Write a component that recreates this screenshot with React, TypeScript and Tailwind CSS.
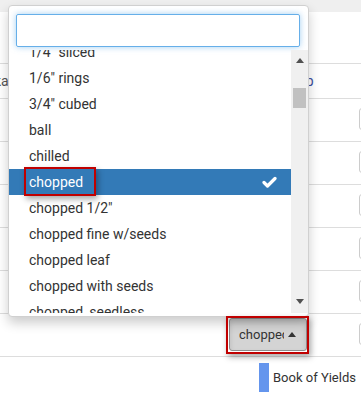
import React from 'react';

const options = [
  '1/4" sliced',
  '1/6" rings',
  '3/4" cubed',
  'ball',
  'chilled',
  'chopped',
  'chopped 1/2"',
  'chopped fine w/seeds',
  'chopped leaf',
  'chopped with seeds',
  'chopped, seedless',
];

const selected = 'chopped';

function Caret({ up = true, className = '' }: { up?: boolean; className?: string }) {
  return (
    <svg width="8" height="5" viewBox="0 0 8 5" className={className}>
      {up ? <polygon points="0,5 8,5 4,0" fill="currentColor" /> : <polygon points="0,0 8,0 4,5" fill="currentColor" />}
    </svg>
  );
}

function TableRow({ active = false }: { active?: boolean }) {
  return (
    <div className="h-[43px] border-b border-[#dddddd] flex items-start pt-[4px]">
      <button
        className={
          active
            ? 'shrink-0 ml-[229px] w-[78px] h-[33px] flex items-center pl-[9px] border border-[#8c8c8c] bg-[#d4d4d4] rounded-[3px] shadow-[inset_0_3px_5px_rgba(0,0,0,0.125)] text-[13px] text-[#333]'
            : 'shrink-0 ml-[229px] w-[78px] h-[33px] flex items-center pl-[9px] border border-[#adadad] bg-white rounded-[3px] text-[13px] text-[#333]'
        }
      >
        <span className="w-[45px] overflow-hidden whitespace-nowrap text-left">chopped</span>
        <Caret className="ml-[4px] text-[#333]" />
      </button>
      <div className="shrink-0 ml-[52px] mt-[5px] w-[14px] h-[22px] border border-[#cccccc] rounded-[3px]" />
    </div>
  );
}

function Scrollbar() {
  return (
    <div className="w-[17px] h-full bg-[#f0f0f0] flex flex-col items-center">
      <Caret className="mt-[8px] text-[#505050]" />
      <div className="mt-[25px] w-[13px] h-[20px] bg-[#c1c1c1]" />
      <div className="flex-1" />
      <Caret up={false} className="mb-[9px] text-[#505050]" />
    </div>
  );
}

export default function App() {
  return (
    <div className="relative w-[361px] h-[408px] bg-white overflow-hidden font-['Roboto',sans-serif] text-[#333]">
      {/* page behind the dropdown */}
      <div className="h-[12px] bg-[#efefef]" />
      <div className="h-[52px] border-b border-[#dddddd]" />
      <div className="h-[35px] border-b border-[#dddddd] flex items-center text-[14px] whitespace-nowrap">
        <span className="shrink-0 w-[291px] -ml-[6px] text-[#555]">ka</span>
        <span className="shrink-0 text-[#3d4f9e]">Prep</span>
      </div>
      <TableRow />
      <TableRow />
      <TableRow />
      <TableRow />
      <TableRow />
      <TableRow active />
      <div className="flex items-start pt-[6px] pl-[259px] gap-[4px]">
        <div className="w-[10px] h-[29px] bg-[#6495ed]" />
        <span className="text-[13px] leading-[29px] text-[#333]">Book of Yields</span>
      </div>

      {/* open select dropdown */}
      <div className="absolute left-[8px] top-[5px] w-[301px] h-[312px] bg-white border border-[#d0d0d0] rounded-[4px] shadow-[0_6px_12px_rgba(0,0,0,0.2)] flex flex-col">
        <div className="px-[7px] pt-[8px]">
          <input className="w-[284px] h-[33px] border border-[#66afe9] rounded-[2px] outline-none shadow-[0_0_6px_rgba(102,175,233,0.6)] px-[8px] text-[14px]" />
        </div>
        <div className="mt-[3px] h-[263px] flex">
          <div className="flex-1 overflow-hidden">
            <ul className="-mt-[11px]">
              {options.map((o) => (
                <li
                  key={o}
                  className={
                    o === selected
                      ? 'h-[26px] flex items-center pl-[20px] pr-[14px] bg-[#337ab7] text-white text-[14px]'
                      : 'h-[26px] flex items-center pl-[20px] pr-[14px] text-[#333] text-[14px]'
                  }
                >
                  <span className="flex-1 whitespace-nowrap">{o}</span>
                  {o === selected && (
                    <svg width="15" height="12" viewBox="0 0 15 12">
                      <polyline points="2,6.5 5.5,10 13,2.5" fill="none" stroke="white" strokeWidth="3.2" strokeLinecap="round" strokeLinejoin="round" />
                    </svg>
                  )}
                </li>
              ))}
            </ul>
          </div>
          <Scrollbar />
        </div>
      </div>

      {/* annotation boxes */}
      <div className="absolute left-[24px] top-[167px] w-[72px] h-[29px] border-2 border-[#c00000] shadow-[2px_3px_6px_rgba(0,0,0,0.35)]" />
      <div className="absolute left-[226px] top-[316px] w-[83px] h-[38px] border-2 border-[#c00000] shadow-[2px_3px_6px_rgba(0,0,0,0.35)]" />
    </div>
  );
}
